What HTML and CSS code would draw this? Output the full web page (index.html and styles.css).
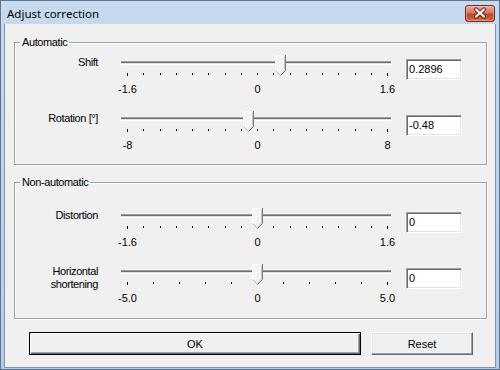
FILE: index.html
```html
<!DOCTYPE html>
<html lang="en">
<head>
  <meta charset="UTF-8">
  <title>Adjust correction</title>
  <link rel="stylesheet" href="styles.css">
</head>
<body>
  <div class="window">
    <div class="titlebar">
      <span class="title">Adjust correction</span>
      <span class="close">
        <svg width="30" height="17" viewBox="0 0 30 17">
          <path d="M11 4.5L19 11.5M19 4.5L11 11.5" stroke="#6a2116" stroke-width="4.2" stroke-linecap="round" fill="none"/>
          <path d="M11 4.5L19 11.5M19 4.5L11 11.5" stroke="#fff" stroke-width="2.2" stroke-linecap="round" fill="none"/>
        </svg>
      </span>
    </div>
    <div class="client">

      <div class="group group-auto">
        <span class="group-title">Automatic</span>
        <div class="row">
          <div class="label">Shift</div>
          <div class="slider">
            <div class="track"></div>
            <div class="ticks"><span></span><span></span><span></span><span></span><span></span><span></span><span></span><span></span><span></span><span></span><span></span><span></span><span></span><span></span><span></span><span></span><span></span></div>
            <div class="scale"><span>-1.6</span><span>0</span><span>1.6</span></div>
            <svg class="thumb" style="left: 154px" width="11" height="21" viewBox="0 0 11 21">
              <path d="M0.5 0.5H10.5V15.5L5.5 20.5L0.5 15.5Z" fill="#f4f4f4"/>
              <path d="M0.5 15.5V0.5H9.5" stroke="#fff" fill="none"/>
              <path d="M0.5 15.5L5.5 20.5" stroke="#b4b4b4" fill="none"/>
              <path d="M10.5 0V15.5L5.5 20.5" stroke="#7a7a7a" fill="none"/>
              <path d="M9.5 1.5V15L5.5 19" stroke="#c8c8c8" fill="none"/>
            </svg>
          </div>
          <div class="field">0.2896</div>
        </div>
        <div class="row">
          <div class="label">Rotation [°]</div>
          <div class="slider">
            <div class="track"></div>
            <div class="ticks"><span></span><span></span><span></span><span></span><span></span><span></span><span></span><span></span><span></span><span></span><span></span><span></span><span></span><span></span><span></span><span></span><span></span></div>
            <div class="scale"><span>-8</span><span>0</span><span>8</span></div>
            <svg class="thumb" style="left: 122px" width="11" height="21" viewBox="0 0 11 21">
              <path d="M0.5 0.5H10.5V15.5L5.5 20.5L0.5 15.5Z" fill="#f4f4f4"/>
              <path d="M0.5 15.5V0.5H9.5" stroke="#fff" fill="none"/>
              <path d="M0.5 15.5L5.5 20.5" stroke="#b4b4b4" fill="none"/>
              <path d="M10.5 0V15.5L5.5 20.5" stroke="#7a7a7a" fill="none"/>
              <path d="M9.5 1.5V15L5.5 19" stroke="#c8c8c8" fill="none"/>
            </svg>
          </div>
          <div class="field">-0.48</div>
        </div>
      </div>

      <div class="group group-manual">
        <span class="group-title">Non-automatic</span>
        <div class="row">
          <div class="label">Distortion</div>
          <div class="slider">
            <div class="track"></div>
            <div class="ticks"><span></span><span></span><span></span><span></span><span></span><span></span><span></span><span></span><span></span><span></span><span></span><span></span><span></span><span></span><span></span><span></span><span></span></div>
            <div class="scale"><span>-1.6</span><span>0</span><span>1.6</span></div>
            <svg class="thumb" style="left: 131px" width="11" height="21" viewBox="0 0 11 21">
              <path d="M0.5 0.5H10.5V15.5L5.5 20.5L0.5 15.5Z" fill="#f4f4f4"/>
              <path d="M0.5 15.5V0.5H9.5" stroke="#fff" fill="none"/>
              <path d="M0.5 15.5L5.5 20.5" stroke="#b4b4b4" fill="none"/>
              <path d="M10.5 0V15.5L5.5 20.5" stroke="#7a7a7a" fill="none"/>
              <path d="M9.5 1.5V15L5.5 19" stroke="#c8c8c8" fill="none"/>
            </svg>
          </div>
          <div class="field">0</div>
        </div>
        <div class="row">
          <div class="label">Horizontal<br>shortening</div>
          <div class="slider">
            <div class="track"></div>
            <div class="ticks"><span></span><span></span><span></span><span></span><span></span><span></span><span></span><span></span><span></span><span></span><span></span></div>
            <div class="scale"><span>-5.0</span><span>0</span><span>5.0</span></div>
            <svg class="thumb" style="left: 131px" width="11" height="21" viewBox="0 0 11 21">
              <path d="M0.5 0.5H10.5V15.5L5.5 20.5L0.5 15.5Z" fill="#f4f4f4"/>
              <path d="M0.5 15.5V0.5H9.5" stroke="#fff" fill="none"/>
              <path d="M0.5 15.5L5.5 20.5" stroke="#b4b4b4" fill="none"/>
              <path d="M10.5 0V15.5L5.5 20.5" stroke="#7a7a7a" fill="none"/>
              <path d="M9.5 1.5V15L5.5 19" stroke="#c8c8c8" fill="none"/>
            </svg>
          </div>
          <div class="field">0</div>
        </div>
      </div>

      <div class="buttons">
        <button class="btn btn-ok">OK</button>
        <button class="btn btn-reset">Reset</button>
      </div>
    </div>
  </div>
</body>
</html>
```

FILE: styles.css
```css
* {
  box-sizing: border-box;
}
body {
  margin: 0;
  font-family: "Liberation Sans", Arial, sans-serif;
  font-size: 11px;
  color: #000;
  background: #b9d1ea;
}

/* Window frame */
.window {
  width: 500px;
  height: 370px;
  border: 1px solid #5f7590;
  background: linear-gradient(#c7d9ee, #b5cce8);
  display: flex;
  flex-direction: column;
}
.titlebar {
  flex: none;
  height: 23px;
  display: flex;
  justify-content: space-between;
  align-items: flex-start;
}
.title {
  font-family: "Noto Sans", sans-serif;
  font-size: 11.5px;
  line-height: 23px;
  padding: 1px 0 0 6px;
  color: #000;
}
.close {
  margin: 4px 4px 0 0;
  width: 30px;
  height: 17px;
  border: 1px solid #6d2a20;
  border-radius: 3px;
  background: linear-gradient(#e9aa9e, #d77563 45%, #c3412c 55%, #d4683f);
  box-shadow: inset 0 0 0 1px rgba(255, 255, 255, 0.35);
  display: flex;
  align-items: center;
  justify-content: center;
}
.close svg {
  display: block;
  margin: -1px;
}
.client {
  flex: 1;
  margin: 0 3px 1px;
  border: 1px solid #8095b0;
  border-top: none;
  background: #f0f0f0;
  display: flex;
  flex-direction: column;
}

/* Group boxes */
.group {
  position: relative;
  margin: 18px 8px 0 9px;
  border: 1px solid #a0a0a0;
  box-shadow: 1px 1px 0 #fff, inset 1px 1px 0 #fff;
}
.group-auto {
  padding: 12px 0 11px;
}
.group-manual {
  margin-top: 17px;
  padding: 25px 0 12px;
}
.group-title {
  position: absolute;
  top: -7px;
  left: 5px;
  padding: 0 2px;
  line-height: 13px;
  background: #f0f0f0;
  letter-spacing: -0.4px;
}

/* Slider rows */
.row {
  display: flex;
  align-items: flex-start;
  height: 42px;
}
.row + .row {
  margin-top: 14px;
}
.label {
  width: 83px;
  text-align: right;
  line-height: 13px;
  margin-top: 1px;
  letter-spacing: -0.4px;
}
.slider {
  position: relative;
  margin-left: 23px;
  width: 270px;
  height: 42px;
}
.track {
  margin-top: 6px;
  height: 4px;
  border-top: 1px solid #a0a0a0;
  border-bottom: 1px solid #fff;
  background: linear-gradient(#6e6e6e 50%, #e3e3e3 50%);
}
.ticks {
  display: flex;
  justify-content: space-between;
  align-items: flex-start;
  padding: 0 3px 0 6px;
  margin-top: 8px;
  height: 3px;
}
.ticks span {
  width: 1px;
  height: 2px;
  background: #000;
}
.ticks span:first-child,
.ticks span:last-child {
  height: 3px;
}
.scale {
  display: flex;
  justify-content: space-between;
  padding: 0 3px 0 6px;
  margin-top: 7px;
  line-height: 13px;
}
.scale span {
  width: 1px;
  display: flex;
  justify-content: center;
  white-space: nowrap;
}
.thumb {
  position: absolute;
  top: 0;
  display: block;
}
.field {
  margin: 4px 0 0 15px;
  width: 56px;
  height: 21px;
  padding: 0 2px;
  line-height: 19px;
  background: #fff;
  border: 1px solid;
  border-color: #a0a0a0 #fff #fff #a0a0a0;
  box-shadow: inset 1px 1px 0 #696969, inset -1px -1px 0 #e3e3e3;
}

/* Buttons */
.buttons {
  display: flex;
  gap: 10px;
  margin: 13px 0 0 24px;
}
.btn {
  height: 23px;
  padding: 0;
  font: inherit;
  color: #000;
  background: #f0f0f0;
  border: 1px solid;
  border-color: #fff #696969 #696969 #fff;
  box-shadow: inset -1px -1px 0 #a0a0a0, inset 1px 1px 0 #e3e3e3;
}
.btn-ok {
  width: 332px;
  border-color: #000;
  box-shadow: inset 1px 1px 0 #fff, inset -1px -1px 0 #696969, inset -2px -2px 0 #a0a0a0;
}
.btn-reset {
  width: 102px;
}
```
